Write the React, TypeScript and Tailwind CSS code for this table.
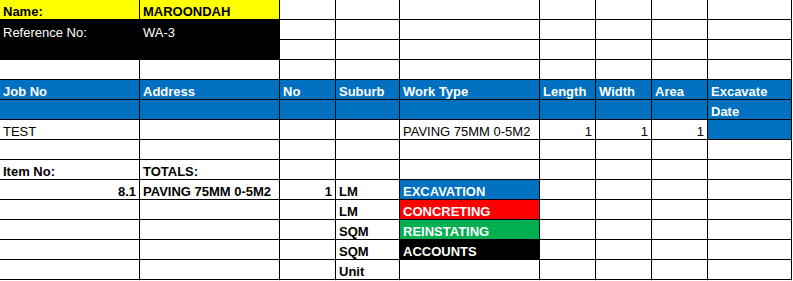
import React from "react";

type Cell = {
  t?: string;
  b?: boolean;
  right?: boolean;
  bg?: string;
  fg?: string;
};

const Y = "bg-[#ffff00]";
const BLUE = "bg-[#0070c0]";
const RED = "bg-[#ff0000]";
const GREEN = "bg-[#00b050]";
const BLK = "bg-black";

const hdr = (t?: string): Cell => ({ t, b: true, bg: BLUE, fg: "text-white" });
const empty = (n: number): Cell[] => Array.from({ length: n }, () => ({}));

// 9 columns, 14 rows. Rows 2-3 cols A:B are one merged black block (rendered separately).
const rows: (Cell[] | "block")[] = [
  [{ t: "Name:", b: true, bg: Y }, { t: "MAROONDAH", b: true, bg: Y }, ...empty(7)],
  "block",
  empty(7),
  empty(9),
  [hdr("Job No"), hdr("Address"), hdr("No"), hdr("Suburb"), hdr("Work Type"), hdr("Length"), hdr("Width"), hdr("Area"), hdr("Excavate")],
  [hdr(), hdr(), hdr(), hdr(), hdr(), hdr(), hdr(), hdr(), hdr("Date")],
  [
    { t: "TEST" },
    {},
    {},
    {},
    { t: "PAVING 75MM 0-5M2" },
    { t: "1", right: true },
    { t: "1", right: true },
    { t: "1", right: true },
    { bg: BLUE },
  ],
  empty(9),
  [{ t: "Item No:", b: true }, { t: "TOTALS:", b: true }, ...empty(7)],
  [
    { t: "8.1", b: true, right: true },
    { t: "PAVING 75MM 0-5M2", b: true },
    { t: "1", b: true, right: true },
    { t: "LM", b: true },
    { t: "EXCAVATION", b: true, bg: BLUE, fg: "text-white" },
    ...empty(4),
  ],
  [{}, {}, {}, { t: "LM", b: true }, { t: "CONCRETING", b: true, bg: RED, fg: "text-white" }, ...empty(4)],
  [{}, {}, {}, { t: "SQM", b: true }, { t: "REINSTATING", b: true, bg: GREEN, fg: "text-white" }, ...empty(4)],
  [{}, {}, {}, { t: "SQM", b: true }, { t: "ACCOUNTS", b: true, bg: BLK, fg: "text-white" }, ...empty(4)],
  [{}, {}, {}, { t: "Unit", b: true }, ...empty(5)],
];

function GridCell({ c }: { c: Cell }) {
  return (
    <div
      className={`flex items-end h-5 px-[3px] border-r border-b border-black whitespace-nowrap overflow-hidden leading-[15px] ${
        c.right ? "justify-end" : "justify-start"
      } ${c.b ? "font-bold" : "font-normal"} ${c.bg ?? "bg-white"} ${c.fg ?? "text-black"}`}
    >
      {c.t}
    </div>
  );
}

export default function App() {
  return (
    <div
      className="w-[793px] h-[281px] bg-white text-[13px] overflow-hidden"
      style={{ fontFamily: '"Liberation Sans", Arial, sans-serif' }}
    >
      <div className="grid grid-cols-[140px_140px_56px_64px_140px_56px_56px_56px_84px] auto-rows-[20px] w-[792px]">
        {rows.map((row, ri) =>
          row === "block" ? (
            <React.Fragment key={ri}>
              <div className="col-span-2 row-span-2 grid grid-cols-[140px_140px] grid-rows-[20px_20px] bg-black text-white border-r border-b border-black">
                <div className="flex items-end px-[3px] leading-[15px] whitespace-nowrap">Reference No:</div>
                <div className="flex items-end px-[3px] leading-[15px] whitespace-nowrap">WA-3</div>
              </div>
              {empty(7).map((c, ci) => (
                <GridCell key={ci} c={c} />
              ))}
            </React.Fragment>
          ) : (
            row.map((c, ci) => <GridCell key={`${ri}-${ci}`} c={c} />)
          )
        )}
        {/* faint sheet gridline stubs below the last bordered row */}
        {empty(9).map((_, ci) => (
          <div key={`g${ci}`} className="h-px border-r border-[#d4d4d4]" />
        ))}
      </div>
    </div>
  );
}
